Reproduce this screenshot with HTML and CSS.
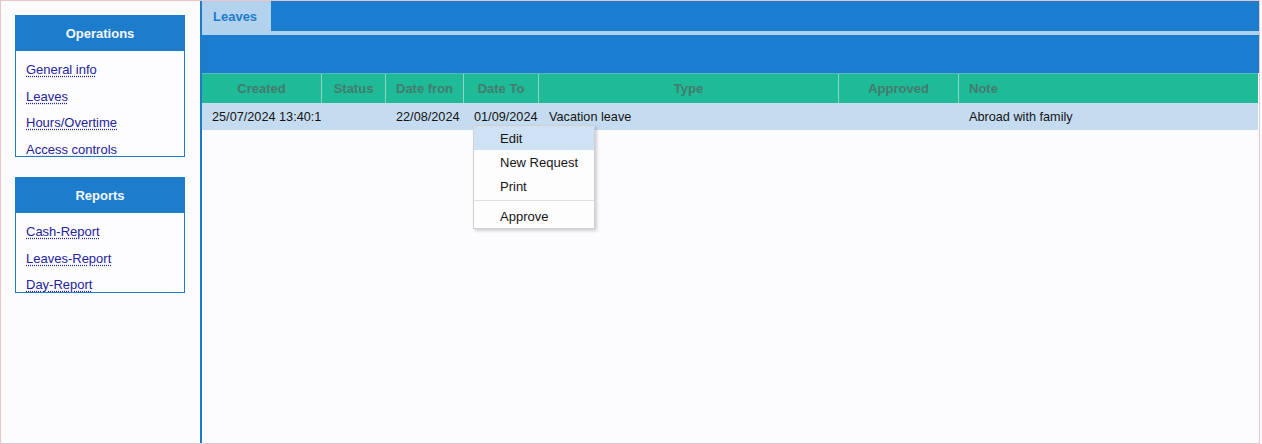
FILE: index.html
```html
<!DOCTYPE html>
<html lang="en">
<head>
<meta charset="utf-8">
<title>Leaves</title>
<link rel="stylesheet" href="styles.css">
</head>
<body>
<div class="frame">
  <aside class="sidebar">
    <section class="box box-ops">
      <h2 class="box-title">Operations</h2>
      <nav class="box-links">
        <a class="link" href="#">General info</a>
        <a class="link" href="#">Leaves</a>
        <a class="link" href="#">Hours/Overtime</a>
        <a class="link" href="#">Access controls</a>
      </nav>
    </section>
    <section class="box box-reports">
      <h2 class="box-title">Reports</h2>
      <nav class="box-links">
        <a class="link" href="#">Cash-Report</a>
        <a class="link" href="#">Leaves-Report</a>
        <a class="link" href="#">Day-Report</a>
      </nav>
    </section>
  </aside>
  <main class="main">
    <div class="tabbar"><div class="tab">Leaves</div></div>
    <div class="strip"></div>
    <div class="toolbar"></div>
    <div class="grid">
      <div class="row head">
        <div class="cell c-center">Created</div>
        <div class="cell c-center">Status</div>
        <div class="cell c-center">Date fron</div>
        <div class="cell c-center">Date To</div>
        <div class="cell c-center">Type</div>
        <div class="cell c-center">Approved</div>
        <div class="cell">Note</div>
      </div>
      <div class="row data">
        <div class="cell">25/07/2024 13:40:1</div>
        <div class="cell"></div>
        <div class="cell">22/08/2024</div>
        <div class="cell">01/09/2024</div>
        <div class="cell">Vacation leave</div>
        <div class="cell"></div>
        <div class="cell">Abroad with family</div>
      </div>
    </div>
    <div class="menu">
      <div class="menu-item active">Edit</div>
      <div class="menu-item">New Request</div>
      <div class="menu-item">Print</div>
      <div class="menu-sep"></div>
      <div class="menu-item">Approve</div>
    </div>
  </main>
</div>
</body>
</html>
```
FILE: styles.css
```css
* { box-sizing: border-box; }
html, body { margin: 0; padding: 0; }
body {
  background: #fcfbfe;
  font-family: "Liberation Sans", Arial, sans-serif;
  font-size: 13px;
  color: #111;
}
.frame {
  width: 1260px;
  height: 444px;
  border: 1px solid #e8c6cc;
  display: flex;
  background: #fcfbfe;
}
.sidebar {
  width: 199px;
  flex: none;
  padding: 14px 0 0 14px;
}
.box {
  width: 170px;
  border: 1px solid #1d7bcb;
  background: #fdfcff;
  overflow: hidden;
}
.box-ops { height: 142px; }
.box-reports { height: 116px; margin-top: 20px; }
.box-title {
  margin: 0;
  height: 35px;
  line-height: 35px;
  background: #1d7dcc;
  color: #f4f8ff;
  font-size: 13px;
  font-weight: bold;
  text-align: center;
}
.box-links {
  padding: 6px 0 0 10px;
}
.link {
  display: block;
  line-height: 26.6px;
  height: 26.6px;
  color: #23239a;
  text-decoration: underline dotted;
  text-underline-offset: 2px;
  white-space: nowrap;
}
.main {
  flex: 1;
  position: relative;
  border-left: 2px solid #1d7bcb;
  display: flex;
  flex-direction: column;
}
.tabbar {
  height: 30px;
  background: #1b7dcd;
  display: flex;
}
.tab {
  width: 69px;
  background: #b3d2ee;
  color: #1e7acb;
  font-weight: bold;
  font-size: 13px;
  line-height: 31px;
  padding-left: 11px;
}
.strip {
  height: 4px;
  background: #b0d1ee;
}
.toolbar {
  height: 38px;
  background: #1b7dcd;
}
.grid {
  width: 1056px;
}
.row {
  display: grid;
  grid-template-columns: 119px 64px 78px 75px 300px 120px 300px;
}
.head {
  height: 30px;
  background: #1fba98;
  border-top: 1px solid #55b8c0;
}
.head .cell {
  font-weight: bold;
  font-size: 13px;
  color: #457a6d;
  line-height: 29px;
}
.head .cell + .cell { border-left: 1px solid #8cd6c2; }
.data {
  height: 27px;
  background: #c5dcf0;
}
.data .cell {
  font-size: 12.7px;
  line-height: 29px;
  color: #141414;
}
.cell {
  padding: 0 10px;
  white-space: nowrap;
  overflow: hidden;
}
.data .cell + .cell { padding-left: 11px; }
.c-center { text-align: center; }
.menu {
  position: absolute;
  left: 271px;
  top: 124px;
  width: 122px;
  background: #fdfdfe;
  border: 1px solid #cfcfd4;
  box-shadow: 2px 2px 3px rgba(0, 0, 0, 0.18);
  font-size: 13px;
  color: #151515;
}
.menu-item {
  height: 24px;
  line-height: 26px;
  padding-left: 26px;
}
.menu-item.active { background: #cfe2f3; }
.menu-sep {
  height: 1px;
  background: #e0e0e4;
  margin: 2px 0 3px;
}
```
